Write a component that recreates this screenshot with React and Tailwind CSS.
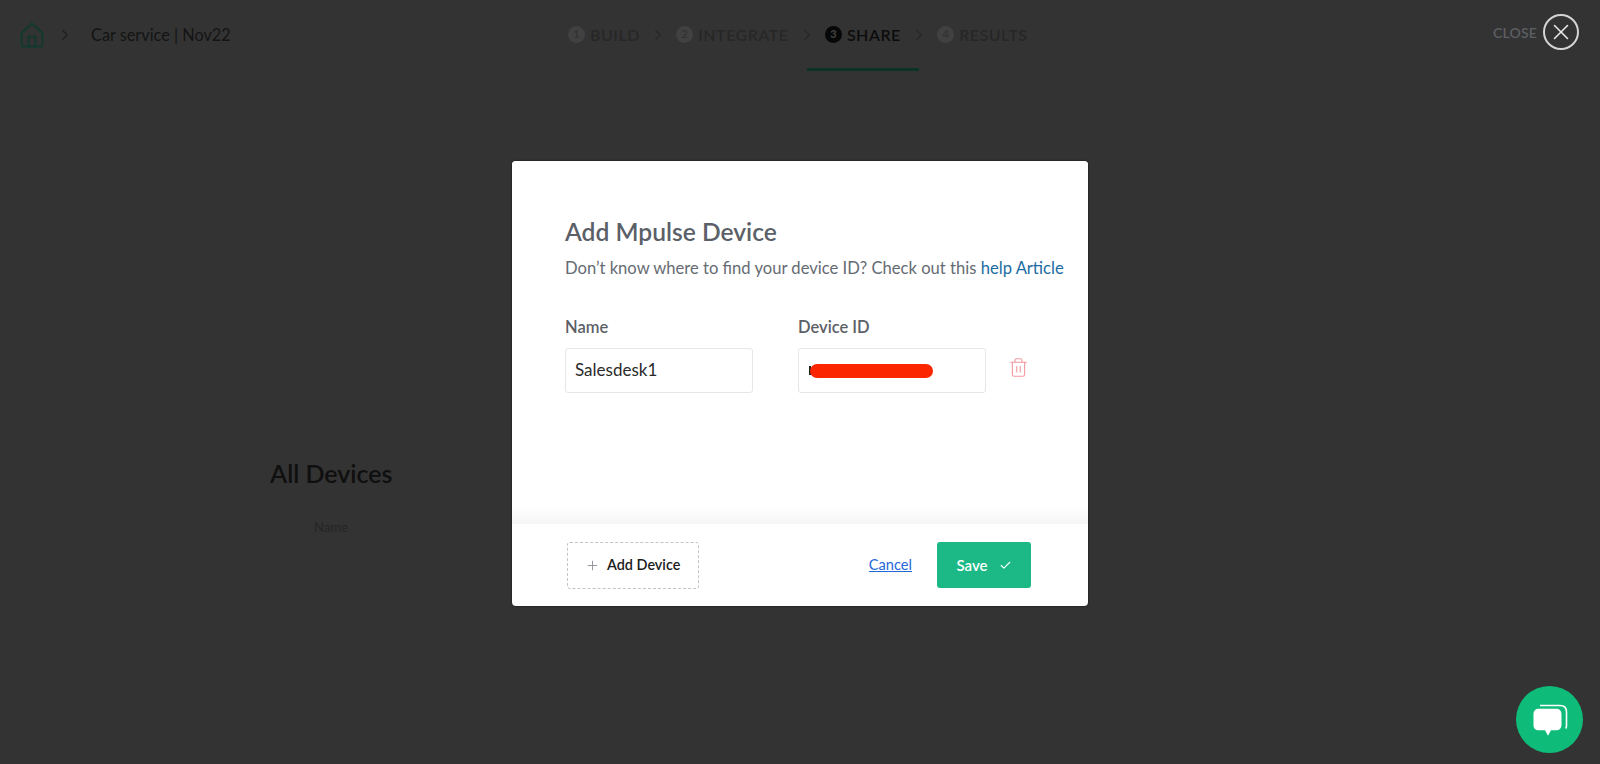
import React from 'react';
import { Check, ChevronRight, Plus, Trash2, X } from 'lucide-react';

const font = "font-['Lato','Noto_Sans',sans-serif]";

const steps = [
  { n: 1, label: 'BUILD' },
  { n: 2, label: 'INTEGRATE' },
  { n: 3, label: 'SHARE', active: true },
  { n: 4, label: 'RESULTS' },
];

function Step({ n, label, active }) {
  return (
    <div className="relative flex h-[71px] items-center pb-[2px]">
      <span className={`flex h-[17px] w-[17px] items-center justify-center rounded-full text-[11px] font-bold ${active ? 'bg-[#070707] text-[#444]' : 'bg-[#414141] text-[#333]'}`}>
        {n}
      </span>
      <span className={`ml-[5px] text-[16px] font-semibold tracking-[0.5px] ${active ? 'text-[#0c0c0c]' : 'text-[#272727]'}`}>{label}</span>
      {active && <span className="absolute bottom-0 left-[-18px] h-[3px] w-[112px] bg-[#0b3327]" />}
    </div>
  );
}

function ChatIcon() {
  return (
    <svg width="38" height="36" viewBox="0 0 38 36" fill="none">
      <path d="M9 3.500h20c4 0 6.500 2.500 6.500 6.500v14c0 1-.3 1.800-.8 2.500" stroke="#fff" strokeWidth="1.600" />
      <path d="M8 6.700h17c3.500 0 5.500 2 5.500 5.500v10.500c0 3.500-2 5.600-5.500 5.600h-5l-3 5.500-3-5.500H8c-3.500 0-5.500-2-5.500-5.600V12.200c0-3.500 2-5.500 5.500-5.500z" fill="#fff" />
    </svg>
  );
}

export default function App() {
  return (
    <div className={`relative h-[764px] w-[1600px] overflow-hidden bg-[#333333] ${font}`}>
      {/* header, dimmed by the overlay colours */}
      <header className="relative flex h-[71px] items-center pb-[2px] pl-[20px]">
        <svg width="24" height="26" viewBox="0 0 24 26" fill="none" stroke="#12392e" strokeWidth="2" strokeLinejoin="round">
          <path d="M1.500 11 12 1.500 22.500 11v11.500a2 2 0 0 1-2 2h-17a2 2 0 0 1-2-2z" />
          <path d="M8.500 24.500V14.500h7v10" />
        </svg>
        <ChevronRight size={18} strokeWidth={1.5} className="ml-[12px] text-[#1f1f1f]" />
        <span className="ml-[17px] mt-[2px] text-[16.3px] text-[#141414]">Car service | Nov22</span>

        <nav className="absolute left-[568px] top-0 flex items-center">
          {steps.map((s, i) => (
            <React.Fragment key={s.n}>
              <Step {...s} />
              {i < steps.length - 1 && <ChevronRight size={18} strokeWidth={1.5} className="mx-[9.2px] mb-[2px] text-[#282828]" />}
            </React.Fragment>
          ))}
        </nav>

        <div className="absolute right-[21px] top-[14px] flex items-center">
          <span className="mr-[6px] text-[14px] font-semibold tracking-[0.2px] text-[#5c5f63]">CLOSE</span>
          <span className="flex h-[36px] w-[36px] items-center justify-center rounded-full border-2 border-[#d4d4d4]">
            <X size={26} strokeWidth={1.5} className="text-[#e8e8e8]" />
          </span>
        </div>
      </header>

      {/* page behind the modal */}
      <main className="pl-[270px] pt-[381px]">
        <h2 className="text-[25px] font-semibold leading-[42px] text-[#0f0f0f]">All Devices</h2>
        <p className="ml-[44px] mt-[24px] text-[13px] font-semibold text-[#272727]">Name</p>
      </main>

      {/* modal */}
      <div className="absolute inset-0 flex items-start justify-center pt-[161px]">
        <div className="flex h-[445px] w-[576px] flex-col overflow-hidden rounded-[4px] bg-white shadow-[0_0_2px_rgba(0,0,0,0.8)]">
          <div className="flex-1 bg-gradient-to-b from-white from-[95%] to-[#f6f6f6] pl-[53px] pt-[54px]">
            <h3 className="text-[24.6px] font-semibold leading-[34px] text-[#5b6068]">Add Mpulse Device</h3>
            <p className="mt-[7px] text-[16.6px] leading-[24px] text-[#666b72]">
              Don’t know where to find your device ID? Check out this <a className="text-[#1b6ca3]">help Article</a>
            </p>
            <div className="mt-[35px] flex items-start">
              <div className="w-[188px]">
                <div className="text-[16.5px] font-semibold leading-[24px] text-[#5c6066]">Name</div>
                <div className="mt-[9px] flex h-[45px] items-center rounded-[3px] border border-[#e6e6e6] pb-[1px] pl-[9px] text-[17px] text-[#2a2a2a]">Salesdesk1</div>
              </div>
              <div className="ml-[45px] w-[188px]">
                <div className="text-[16.5px] font-semibold leading-[24px] text-[#5c6066]">Device ID</div>
                <div className="mt-[9px] flex h-[45px] items-center rounded-[3px] border border-[#e6e6e6] pl-[10px]">
                  <span className="h-[9px] w-[2px] bg-[#222]" />
                  <span className="-ml-[1px] mt-[1px] h-[14px] w-[123px] rounded-full bg-[#fb2500]" />
                </div>
              </div>
              <Trash2 size={21} strokeWidth={1.3} className="ml-[22px] mt-[42px] text-[#f29ba0]" />
            </div>
          </div>
          <div className="flex h-[82px] items-center pl-[55px] pr-[57px]">
            <button className="flex h-[47px] w-[132px] items-center justify-start rounded-[3px] border border-dashed border-[#c4c4c4] pl-[17px] text-[14.4px] font-semibold text-[#1c1c1c]">
              <Plus size={15} strokeWidth={1.5} className="mr-[7px] text-[#8f9298]" />
              Add Device
            </button>
            <a className="ml-auto text-[14.6px] text-[#2468d8] underline">Cancel</a>
            <button className="ml-[25px] flex h-[46px] w-[94px] items-center justify-center rounded-[3px] bg-[#1cb987] text-[15px] font-semibold text-white">
              Save
              <Check size={13} strokeWidth={2} className="ml-[11px]" />
            </button>
          </div>
        </div>
      </div>

      {/* chat widget */}
      <div className="absolute bottom-[11px] right-[17px] flex h-[67px] w-[67px] items-center justify-center rounded-full bg-[#0fbb78]">
        <ChatIcon />
      </div>
    </div>
  );
}
